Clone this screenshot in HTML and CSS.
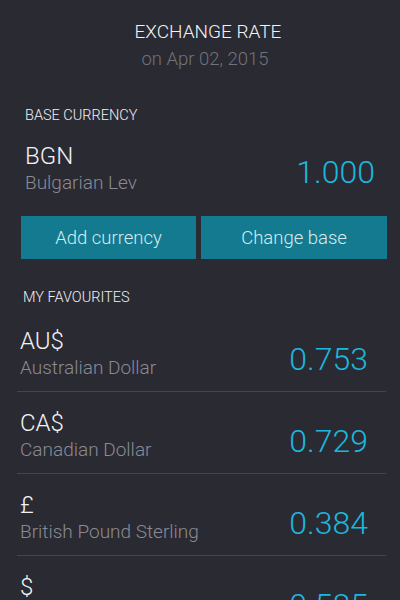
FILE: index.html
```html
<!DOCTYPE html>
<html lang="en">
<head>
    <meta charset="UTF-8">
    <meta name="viewport" content="width=device-width, initial-scale=1.0">
    <title>Exchange Rate</title>
    <link rel="stylesheet" href="styles.css">
</head>
<body>

<div class="screen">
    <header class="header">
        <h1 class="title">EXCHANGE RATE</h1>
        <div class="date">on Apr 02, 2015</div>
    </header>

    <section class="base">
        <h2 class="section-label">BASE CURRENCY</h2>
        <div class="base-row">
            <div class="currency">
                <div class="code">BGN</div>
                <div class="name">Bulgarian Lev</div>
            </div>
            <div class="rate">1.000</div>
        </div>
        <div class="actions">
            <button type="button" class="btn btn-add">Add currency</button>
            <button type="button" class="btn btn-change">Change base</button>
        </div>
    </section>

    <section class="favourites">
        <h2 class="section-label">MY FAVOURITES</h2>
        <ul class="fav-list">
            <li class="fav-item">
                <div class="currency">
                    <div class="code">AU$</div>
                    <div class="name">Australian Dollar</div>
                </div>
                <div class="rate">0.753</div>
            </li>
            <li class="fav-item">
                <div class="currency">
                    <div class="code">CA$</div>
                    <div class="name">Canadian Dollar</div>
                </div>
                <div class="rate">0.729</div>
            </li>
            <li class="fav-item">
                <div class="currency">
                    <div class="code">£</div>
                    <div class="name">British Pound Sterling</div>
                </div>
                <div class="rate">0.384</div>
            </li>
            <li class="fav-item">
                <div class="currency">
                    <div class="code">$</div>
                    <div class="name">US Dollar</div>
                </div>
                <div class="rate">0.585</div>
            </li>
        </ul>
    </section>
</div>

</body>
</html>
```

FILE: styles.css
```css
body {
    font-family: Roboto, "Noto Sans", sans-serif;
    font-weight: 300;
    background-color: #2a2a33;
    color: #f2f2f4;
    margin: 0;
    padding: 0;
    overflow: hidden;
}

.screen {
    width: 400px;
}

.header {
    text-align: center;
    padding-top: 21px;
    padding-left: 10px;
}

.title {
    margin: 0;
    padding-left: 6px;
    font-size: 19px;
    font-weight: 300;
    line-height: 22px;
}

.date {
    font-size: 18.5px;
    line-height: 22px;
    margin-top: 5px;
    color: #72727c;
}

.section-label {
    margin: 0;
    font-size: 14.5px;
    font-weight: 300;
    line-height: 16px;
    color: #f0f0f3;
}

.base {
    padding: 0 13px 0 21px;
    margin-top: 38px;
}

.base .section-label {
    padding-left: 4px;
}

.base-row {
    display: flex;
    align-items: flex-end;
    justify-content: space-between;
    padding: 0 12px 0 4px;
    margin-top: 18px;
}

.code {
    font-size: 24px;
    line-height: 28px;
}

.name {
    font-size: 19px;
    line-height: 24px;
    color: #8a8a94;
    margin-top: 1px;
}

.rate {
    font-size: 32px;
    line-height: 36px;
    color: #1cb6de;
    margin-bottom: 5px;
}

.actions {
    display: grid;
    grid-template-columns: 175px 186px;
    gap: 5px;
    margin-top: 21px;
}

.btn {
    height: 43px;
    border: none;
    background-color: #137a8f;
    color: #d4ecf1;
    font-family: inherit;
    font-weight: 300;
    font-size: 18.5px;
    padding: 0;
    cursor: pointer;
}

.favourites {
    margin-top: 31px;
    padding: 0 14px 0 17px;
}

.favourites .section-label {
    padding-left: 6px;
}

.fav-list {
    list-style: none;
    margin: 4px 0 0;
    padding: 0;
}

.fav-item {
    display: flex;
    align-items: flex-end;
    justify-content: space-between;
    padding: 17px 18px 11px 3px;
    border-bottom: 1px solid #45454f;
}

.fav-item .rate {
    margin-bottom: 3px;
}
```
